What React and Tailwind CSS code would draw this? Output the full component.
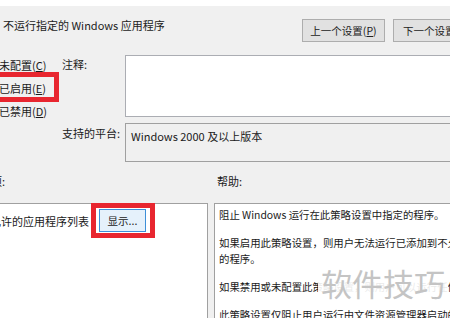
import React from "react";

const radios = [
  { label: "未配置", key: "C" },
  { label: "已启用", key: "E", marked: true },
  { label: "已禁用", key: "D" },
];

const helpParagraphs = [
  ["阻止 Windows 运行在此策略设置中指定的程序。"],
  ["如果启用此策略设置，则用户无法运行已添加到不允许的应用程序列表中", "的程序。"],
  ["如果禁用或未配置此策略设置，则用户可以运行任何程序。"],
  ["此策略设置仅阻止用户运行由文件资源管理器启动的程序。"],
];

const Hotkey = ({ label, k }) => (
  <span>
    {label}(<span className="underline underline-offset-1">{k}</span>)
  </span>
);

export default function App() {
  return (
    <div
      className="relative h-[318px] w-[450px] overflow-hidden bg-[#f0f0f0] text-[11px] leading-[16px] text-[#1a1a1a]"
      style={{ fontFamily: '"Noto Sans CJK SC", "Noto Sans", sans-serif' }}
    >
      <div className="h-[6px] bg-white" />

      {/* header */}
      <div className="flex h-[39px] items-start">
        <p className="ml-[3px] mt-[11px] shrink-0 whitespace-nowrap text-[11px] text-[#222]">
          不运行指定的 Windows 应用程序
        </p>
        <div className="ml-auto mt-[13px] flex shrink-0 gap-[8px]">
          <button className="h-[23px] w-[83px] shrink-0 border border-[#adadad] bg-[#e1e1e1] text-[10.5px] text-[#222]">
            <Hotkey label="上一个设置" k="P" />
          </button>
          <button className="-mr-[30px] h-[23px] w-[87px] shrink-0 border border-[#adadad] bg-[#e1e1e1] text-[10.5px] text-[#222]">
            <Hotkey label="下一个设置" k="N" />
          </button>
        </div>
      </div>

      {/* settings */}
      <div className="mt-[10px] flex">
        <div className="flex w-[62px] shrink-0 flex-col gap-[5px] pt-[1px]">
          {radios.map((r) => (
            <div key={r.key} className="relative -ml-[1px] whitespace-nowrap py-[1px]">
              <Hotkey label={r.label} k={r.key} />
              {r.marked && (
                <span className="absolute -left-[8px] -top-[7px] h-[30px] w-[68px] border-[5px] border-[#e8262f]" />
              )}
            </div>
          ))}
        </div>
        <div className="flex w-[63px] shrink-0 flex-col">
          <span className="mt-[1px]">注释:</span>
          <span className="mt-[53px] whitespace-nowrap">支持的平台:</span>
        </div>
        <div className="flex w-[340px] shrink-0 flex-col gap-[6px]">
          <div className="h-[62px] border border-[#abadb3] bg-white" />
          <div className="h-[39px] border border-[#a0a0a0] bg-[#f0f0f0] px-[5px] pt-[4px]">
            Windows 2000 及以上版本
          </div>
        </div>
      </div>

      {/* section labels */}
      <div className="mt-[11px] flex h-[30px]">
        <span className="-ml-[20px] w-[237px] shrink-0">选项:</span>
        <span>帮助:</span>
      </div>

      {/* panels */}
      <div className="flex gap-[6px]">
        <div className="-ml-[20px] h-[130px] w-[228px] shrink-0 border border-[#a0a0a0] bg-white">
          <div className="flex items-center pt-[5px]">
            <span className="-ml-[2px] whitespace-nowrap">不允许的应用程序列表</span>
            <div className="relative ml-[10px]">
              <button className="h-[23px] w-[47px] border border-[#3c8fd8] bg-[#e5f1fb] text-[10.5px] text-[#222]">
                显示...
              </button>
              <span className="absolute -left-[8px] -top-[6px] h-[35px] w-[64px] border-[5px] border-[#e8262f]" />
            </div>
          </div>
        </div>
        <div className="h-[130px] w-[260px] shrink-0 border border-[#a0a0a0] bg-white pl-[4px] pt-[3px] text-[10.4px]">
          {helpParagraphs.map((lines, i) => (
            <div key={i} className="mb-[12px]">
              {lines.map((line) => (
                <p key={line} className="whitespace-nowrap">
                  {line}
                </p>
              ))}
            </div>
          ))}
        </div>
      </div>

      {/* watermark */}
      <div className="absolute left-[318px] top-[264px] whitespace-nowrap bg-white/90 px-[3px] text-[31px] leading-[38px] text-[#c4c4c4]">
        软件技巧
      </div>
    </div>
  );
}
